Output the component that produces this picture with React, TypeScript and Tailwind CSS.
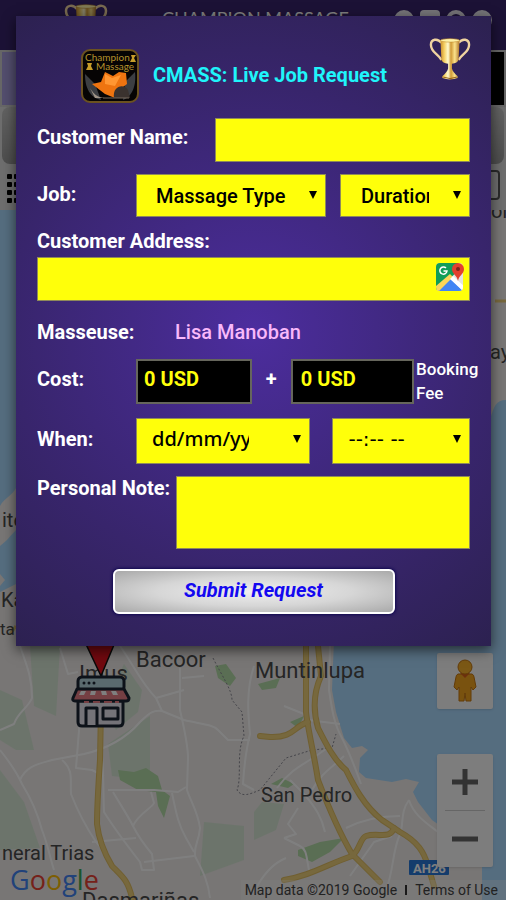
import type { ReactNode } from 'react';
import clsx from 'clsx';

const FIELD = 'w-full rounded-none border border-[#8f8a5a] bg-[#ffff0a] text-black outline-none';
const LABEL = 'text-xl leading-6 font-bold text-white';

const GOOGLE_LETTERS = [
  { char: 'G', color: 'text-[#4285f4]' },
  { char: 'o', color: 'text-[#ea4335]' },
  { char: 'o', color: 'text-[#fbbc05]' },
  { char: 'g', color: 'text-[#4285f4]' },
  { char: 'l', color: 'text-[#34a853]' },
  { char: 'e', color: 'text-[#ea4335]' },
];

const PLACES = [
  { name: 'Bacoor', x: 136, y: 667, size: 22 },
  { name: 'Imus', x: 79, y: 681, size: 22 },
  { name: 'Muntinlupa', x: 255, y: 678, size: 22 },
  { name: 'San Pedro', x: 261, y: 802, size: 20 },
  { name: 'neral Trias', x: 2, y: 860, size: 20 },
  { name: 'Dasmariñas', x: 82, y: 908, size: 22 },
  { name: 'ite', x: 2, y: 527, size: 20 },
  { name: 'Ka', x: 1, y: 607, size: 20 },
  { name: 'ta', x: 0, y: 635, size: 17 },
  { name: 'ay', x: 490, y: 359, size: 20 },
  { name: 'or', x: 491, y: 218, size: 20 },
];

// Fine local roads, drawn under the highways
const ROADS = [
  'M20 646 C26 664 32 676 32 698 C28 708 18 712 14 724 L0 730',
  'M0 750 C12 765 18 775 22 784 C32 800 38 815 42 830 C48 845 50 858 54 870',
  'M20 780 C26 766 38 764 52 760 L84 754 C110 748 128 736 140 722 C150 712 154 710 162 711 L184 720 C200 724 212 724 218 730 L228 740 L250 740',
  'M62 760 C74 770 70 780 71 794 C78 812 88 830 96 842 C102 850 110 852 114 872',
  'M80 718 L76 768 L92 770 L104 776',
  'M60 648 L68 674 L78 672',
  'M100 742 C104 758 103 790 104 812 C114 828 126 844 140 862 L142 870 L154 870 L152 854 C142 842 138 836 133 826 C138 814 152 808 154 803 L151 792',
  'M120 646 C134 666 142 684 156 698 L162 711',
  'M108 790 L154 790 L178 792 L186 787',
  'M113 792 C120 804 128 816 133 826',
  'M172 793 C176 812 178 824 186 838 L194 852',
  'M180 668 L180 710 C184 728 188 744 188 758 L187 790 C190 800 198 812 200 828 C199 842 194 844 195 856 C202 870 208 880 210 898',
  'M92 842 L136 838',
  'M144 862 L194 856',
  'M254 666 C246 690 248 714 250 734 C246 750 244 768 243 784 L254 790',
  'M156 698 L184 690 M182 678 L204 676',
  'M330 646 L329 690 C332 710 334 724 342 738 C350 754 356 770 361 784',
  'M277 788 C290 770 304 764 316 756 L330 746 M312 790 C322 772 332 768 344 756',
  'M290 780 L304 794 C316 808 322 818 325 832',
  'M346 828 C362 820 380 816 400 816 M409 800 C400 812 404 824 400 834 C392 852 394 870 386 890',
  'M409 800 C414 816 428 824 438 832',
  'M284 838 L300 846 C308 850 306 860 310 874 M284 838 L296 834 L288 824 L298 808',
  'M254 892 C264 872 276 862 286 858 M350 876 L374 842 L392 836',
  'M308 720 L340 724 M284 706 L304 714',
];

const HIGHWAYS = [
  'M101 708 L100 760 C98 790 97 806 97 824 C99 842 106 856 112 866 C122 876 128 880 132 898',
  'M306 646 L306 712 C308 730 314 754 318 780 C328 806 340 834 352 854 L380 882',
  'M318 646 L321 676 C312 696 314 714 318 728 C326 744 334 760 346 770 C354 786 364 806 382 820 L400 832 C418 842 424 852 428 866 L434 886',
  'M308 722 C294 726 294 738 270 737 L260 736',
  'M284 880 C310 876 328 864 352 856 C360 850 360 838 366 836 C378 832 390 840 394 828',
];

const PARKS = [
  'M30 646 L60 646 L56 716 L34 706 Z',
  'M0 690 L22 700 L34 750 L16 750 L0 740 Z',
  'M124 664 L142 690 L138 712 L116 730 L104 706 Z',
  'M108 744 L150 716 L150 780 L112 776 Z',
  'M204 822 L244 826 L244 860 L200 876 Z',
  'M0 770 L24 802 L40 848 L0 850 Z',
  'M254 812 L262 802 L284 804 L276 830 L254 840 Z',
];

const GROVES = [
  'M118 770 L134 772 L146 768 L158 776 L162 790 L170 796 L164 818 L158 806 L156 792 L138 790 L120 780 Z',
  'M215 666 L226 664 L236 678 L230 686 L218 678 Z',
  'M271 784 L282 778 L294 784 L288 788 Z',
  'M258 684 L280 678 L276 688 L262 690 Z',
  'M298 850 L320 842 L344 838 L330 852 L312 862 L298 856 Z',
  'M290 722 L304 716 L298 728 Z',
];

function MapCanvas() {
  return (
    <svg
      className="absolute inset-0 h-full w-full"
      viewBox="0 210 506 690"
      preserveAspectRatio="xMidYMid slice"
      aria-label="Map"
    >
      <rect y="200" width="506" height="700" fill="#f0ecea" />
      <path d="M0 200 H300 V640 H0 Z" fill="#aadaff" />
      <path d="M16 488 C12 496 4 498 0 506 V546 C8 540 10 536 16 530 Z" fill="#f0ecea" />
      <path d="M0 574 L5 580 L0 586 Z M0 592 L16 584 V650 H0 Z" fill="#f0ecea" />
      <path
        d="M334 640 L332 690 L336 712 L344 738 L352 748 L362 746 L368 750 L360 758 L359 772 L366 778 L392 782 L406 779 L419 782 L413 792 L418 802 L432 820 L460 840 L482 866 V900 H506 V400 C496 400 494 406 490 420 V640 Z"
        fill="#aadaff"
      />
      {PARKS.map((d) => (
        <path key={d} d={d} fill="#cfe8cf" opacity="0.7" />
      ))}
      {GROVES.map((d) => (
        <path key={d} d={d} fill="#b4dca8" />
      ))}
      <g fill="none" stroke="#ffffff" strokeWidth="2" strokeLinejoin="round">
        {ROADS.map((d) => (
          <path key={d} d={d} />
        ))}
      </g>
      <g fill="none" stroke="#8a8a94" strokeWidth="1" strokeDasharray="2 2">
        <path d="M213 658 C222 676 232 690 232 700 L242 712 L244 736 C236 752 242 778 237 790 C242 798 250 794 260 790 L286 758 L312 750 L332 748 L336 734" />
      </g>
      <g fill="none" strokeLinecap="round">
        {HIGHWAYS.map((d) => (
          <path key={d} d={d} stroke="#e0be62" strokeWidth="6" />
        ))}
        {HIGHWAYS.map((d) => (
          <path key={d} d={d} stroke="#efd07a" strokeWidth="4" />
        ))}
      </g>
      <path d="M495 301 H506 M10 634 L16 626" stroke="#efd07a" strokeWidth="3" />
      <g className="font-[Roboto,sans-serif]" fill="#4a4a4a">
        {PLACES.map((place) => (
          <text key={place.name} x={place.x} y={place.y} fontSize={place.size}>
            {place.name}
          </text>
        ))}
      </g>
      <rect x="409" y="860" width="40" height="15" rx="1" fill="#2878d8" />
      <text x="413" y="873" fontSize="13" fontWeight="700" fill="#ffffff" className="font-[Roboto,sans-serif]">
        AH26
      </text>

      {/* selected shop and its pin */}
      <path d="M84 640 H116 L101 676 Z" fill="#e3131f" stroke="#111" strokeWidth="1.5" />
      <g stroke="#1b2433" strokeWidth="3" strokeLinejoin="round">
        <path d="M78 701 V722 Q78 726 82 726 H119 Q123 726 123 722 V701 Z" fill="#e8e6f0" />
        <rect x="78" y="677" width="46" height="14" rx="4" fill="#b4d4dc" />
        <path d="M77 689 H124 L129 698 Q129 701 126 701 H75 Q72 701 73 698 Z" fill="#ea7f86" />
        <path d="M86 725 V708 H97 V725" fill="#e8e6f0" />
        <rect x="103" y="708" width="15" height="11" fill="#e8e6f0" />
      </g>
      <path d="M81 691 h5 l-2 4 h-5 Z M91 691 h5 l-1 4 h-5 Z M101 691 h5 l1 4 h-5 Z M111 691 h5 l2 4 h-5 Z" fill="#fff" />
      <path d="M84 702 h5 M93 702 h7 M104 702 h8 M115 702 h4" stroke="#ea7f86" strokeWidth="2" />
      <g fill="#1b2433">
        <circle cx="84" cy="683" r="1.5" />
        <circle cx="89" cy="683" r="1.5" />
        <circle cx="94" cy="683" r="1.5" />
      </g>
    </svg>
  );
}

function Trophy({ className }: { className?: string }) {
  return (
    <svg className={className} viewBox="0 0 44 46" aria-hidden="true">
      <defs>
        <linearGradient id="gold" x1="0" x2="1">
          <stop offset="0" stopColor="#c98e2c" />
          <stop offset="0.2" stopColor="#f5cf62" />
          <stop offset="0.4" stopColor="#fffbd0" />
          <stop offset="0.55" stopColor="#d09a36" />
          <stop offset="0.75" stopColor="#fbe28a" />
          <stop offset="1" stopColor="#b0762a" />
        </linearGradient>
      </defs>
      <g fill="none" stroke="#f0d4a0" strokeWidth="2.5">
        <path d="M13 6 C9 1 2 2 2 8 C2 16 9 17 13 24" />
        <path d="M31 6 C35 1 42 2 42 8 C42 16 35 17 31 24" />
      </g>
      <path d="M12 3 H32 L31 24 Q30 27 24 28 L24 33 Q25 37 30 41 V43 Q22 46 14 43 V41 Q19 37 20 33 L20 28 Q14 27 13 24 Z" fill="url(#gold)" />
      <ellipse cx="22" cy="3.5" rx="10" ry="1.8" fill="#fff3a8" stroke="#c08a2c" strokeWidth="0.6" />
      <path d="M15 42 Q22 45 29 42" fill="none" stroke="#8f5a14" strokeWidth="1" />
    </svg>
  );
}

function AppIcon() {
  return (
    <svg className="size-[58px] shrink-0" viewBox="0 0 58 58" aria-hidden="true">
      <rect x="1" y="2" width="56" height="52" rx="8" fill="#060404" stroke="#6b5220" strokeWidth="2" />
      <path d="M4 26 C4 44 12 50 20 52 L14 36 Z M54 24 C56 42 48 50 42 52 L44 34 Z" fill="#3c3e42" />
      <path d="M20 34 L24 24 L32 28 L38 24 L45 25 L46 36 L38 42 L34 50 L24 46 L11 36 Z" fill="#ee7410" />
      <path d="M24 26 L31 30 L40 27 L34 38 L24 36 Z" fill="#ff9632" />
      <path d="M33 50 C31 38 43 35 47 42 L49 50 Z" fill="#3a322e" />
      <path d="M9 40 C14 48 18 50 26 50 H14 Z" fill="#a09488" />
      <path d="M22 50 H48" stroke="#75685c" strokeWidth="1" />
      <g fill="#b5932c" fontSize="10" className="font-[Lato,sans-serif]">
        <text x="4" y="13">Champion</text>
        <text x="15" y="22">Massage</text>
      </g>
      <path d="M50 7 h5 l-2 3 2 4 h-6 l2 -4 Z M6 15 h5 l-1 3 2 4 h-7 l2 -4 Z" fill="#c79d2a" />
    </svg>
  );
}

function MapsIcon({ className }: { className?: string }) {
  return (
    <svg className={className} viewBox="0 0 28 28" aria-hidden="true">
      <defs>
        <clipPath id="tile">
          <rect width="27" height="28" rx="4" />
        </clipPath>
      </defs>
      <g clipPath="url(#tile)">
        <rect width="28" height="28" fill="#e4e4e4" />
        <path d="M0 0 H22 V8 L0 28 Z" fill="#109d58" />
        <path d="M14 15 L27 28 H1 Z" fill="#4285f4" />
        <path d="M0 23 L14 11 L17 14 L3 28 H0 Z" fill="#fbd55a" />
        <path d="M14 16 L27 28 H29 V24 L17 13 Z" fill="#ffffff" />
      </g>
      <path d="M10 5 A3.6 3.6 0 1 0 11 8 H7.5" fill="none" stroke="#fff" strokeWidth="1.5" />
      <path d="M22 18 C21 12 16 11 16 6 A6 6 0 0 1 28 6 C28 11 23 12 22 18 Z" fill="#e2402f" />
      <circle cx="22" cy="6" r="2" fill="#7d241c" />
    </svg>
  );
}

function Pegman() {
  return (
    <svg className="h-11 w-6" viewBox="0 0 24 44" aria-hidden="true">
      <path d="M5 15 H19 Q21 16 21 18 L23 28 L20 31 L18 28 L18 42 H13 L12 34 L11 42 H6 L6 28 L4 31 L1 28 L3 18 Q3 16 5 15 Z" fill="#f2a51e" stroke="#c77710" />
      <path d="M7 14 L12 19 L17 14 Z" fill="#d9601a" />
      <circle cx="12" cy="8" r="7" fill="#f7b02a" stroke="#c77710" />
    </svg>
  );
}

type DropdownProps = {
  id: string;
  label: string;
  value: string;
  className: string;
  selectClassName: string;
};

function Dropdown({ id, label, value, className, selectClassName }: DropdownProps) {
  return (
    <div className={clsx('relative', className)}>
      <select
        id={id}
        aria-label={label}
        className={clsx(FIELD, 'appearance-none text-xl font-medium', selectClassName)}
      >
        <option>{value}</option>
      </select>
      <svg className="pointer-events-none absolute top-4 right-2 h-2.5 w-2.5" viewBox="0 0 10 10" aria-hidden="true">
        <path d="M1 1 H9 L5 9 Z" />
      </svg>
    </div>
  );
}

function Row({ label, htmlFor, children }: { label: string; htmlFor: string; children: ReactNode }) {
  return (
    <div className="flex items-center">
      <label htmlFor={htmlFor} className={clsx(LABEL, 'w-[99px] shrink-0 pb-1')}>
        {label}
      </label>
      {children}
    </div>
  );
}

function JobRequestForm() {
  return (
    <form
      onSubmit={(e) => e.preventDefault()}
      className="bg-[radial-gradient(circle_at_center,#4c2d9e_0%,#38256c_62%,#2c2150_100%)] px-[21px] pt-8 pb-8 shadow-[0_4px_12px_rgba(0,0,0,0.6)]"
    >
      <div className="flex items-center gap-3.5 pl-11">
        <AppIcon />
        <h1 className="pb-1 text-xl font-bold text-[#1ff4fa]">CMASS: Live Job Request</h1>
      </div>
      <Trophy className="absolute top-5 right-5 h-[46px] w-[42px]" />

      <div className="mt-3 flex items-start">
        <label htmlFor="name" className={clsx(LABEL, 'w-[178px] shrink-0 pt-[7px]')}>
          Customer Name:
        </label>
        <input id="name" type="text" className={clsx(FIELD, 'h-11 min-w-0 px-3 text-xl')} />
      </div>

      <div className="mt-3">
        <Row label="Job:" htmlFor="massage">
          <Dropdown id="massage" label="Massage type" value="Massage Type" className="min-w-0 flex-[190]" selectClassName="h-[43px] pl-[19px] pr-9" />
          <Dropdown id="duration" label="Duration" value="Duration" className="ml-3.5 min-w-0 flex-[130]" selectClassName="h-[43px] pl-5 pr-10" />
        </Row>
      </div>

      <label htmlFor="address" className={clsx(LABEL, 'mt-3 block')}>
        Customer Address:
      </label>
      <div className="relative mt-1">
        <input id="address" type="text" className={clsx(FIELD, 'block h-11 pr-11 pl-3 text-xl')} />
        <button type="button" aria-label="Pick on map" className="absolute top-1.5 right-1.5">
          <MapsIcon className="h-7 w-7" />
        </button>
      </div>

      <div className="mt-[19px] flex">
        <span className={clsx(LABEL, 'w-[138px] shrink-0')}>Masseuse:</span>
        <span className="text-xl leading-6 font-medium text-[#f8b8fa]">Lisa Manoban</span>
      </div>

      <div className="mt-[13px] -mr-2.5">
        <Row label="Cost:" htmlFor="cost">
          <input id="cost" readOnly value="0 USD" className="h-[45px] min-w-0 flex-[118] border-2 border-[#66665c] bg-black px-1.5 pb-1 text-xl font-bold text-[#ffff0a]" />
          <span className="w-[39px] pb-1 text-center text-xl font-bold text-white">+</span>
          <input id="fee" readOnly value="0 USD" className="h-[45px] min-w-0 flex-[122] border-2 border-[#66665c] bg-black px-2 pb-1 text-xl font-bold text-[#ffff0a]" />
          <label htmlFor="fee" className="ml-0.5 w-[64px] text-[17px] leading-6 font-medium text-white">
            Booking Fee
          </label>
        </Row>
      </div>

      <div className="mt-[13px]">
        <Row label="When:" htmlFor="date">
          <Dropdown id="date" label="Date" value="dd/mm/yyyy" className="min-w-0 flex-[175]" selectClassName="h-[46px] pl-[15px] pr-15 pb-1 font-['Noto_Sans',sans-serif]" />
          <Dropdown id="time" label="Time" value="--:-- --" className="ml-[22px] min-w-0 flex-[138]" selectClassName="h-[46px] pl-[15px] pb-1 font-['DejaVu_Sans',sans-serif]" />
        </Row>
      </div>

      <div className="mt-3 flex items-start">
        <label htmlFor="note" className={clsx(LABEL, 'w-[139px] shrink-0')}>
          Personal Note:
        </label>
        <textarea id="note" className={clsx(FIELD, 'h-[73px] min-w-0 resize-none p-2 text-xl')} />
      </div>

      <button
        type="submit"
        className="mx-auto mt-5 block h-[45px] w-[282px] rounded-md border-2 border-white bg-[radial-gradient(ellipse_at_center,#efefef_0%,#d6d6d6_50%,#a9a9a9_100%)] pb-1 text-xl font-bold text-[#1408f0] italic shadow-[0_0_3px_1px_#100850]"
      >
        Submit Request
      </button>
    </form>
  );
}

export default function App() {
  return (
    <div className="relative flex min-h-screen flex-col overflow-hidden font-[Roboto,sans-serif]">
      <header className="flex h-[50px] items-start bg-[#38246c] pt-[3px] pr-3.5 pl-16">
        <Trophy className="h-[46px] w-11" />
        <span className="ml-[54px] pt-px font-[Lato,sans-serif] text-lg whitespace-nowrap text-white">
          CHAMPION MASSAGE
        </span>
        <div className="mt-[7px] ml-auto flex gap-1.5">
          <span className="size-5 rounded-full bg-white/90" />
          <span className="size-5 rounded bg-white/90" />
          <span className="size-5 rounded-full border-4 border-white/90" />
          <span className="size-5 rounded-full bg-white/90" />
        </div>
      </header>

      <nav className="flex h-[57px] border-2 border-[#cfcfcf]">
        <span className="flex-1 bg-[#a79ddd]" />
        <span className="flex-1 bg-black" />
      </nav>
      <div className="h-[61px] bg-[#dcdcdc] px-0.5 pb-1">
        <div className="h-full rounded-lg bg-linear-to-b from-[#c4c4c4] to-[#9b9b9b]" />
      </div>
      <div className="flex h-[42px] items-start justify-between bg-[#dcdcdc] px-1.5 pt-0.5">
        <svg className="mt-0.5 h-8 w-8" viewBox="0 0 32 32" aria-hidden="true">
          {[2, 10, 18, 26].map((y) =>
            [1, 8, 16, 24].map((x) => <rect key={`${x}-${y}`} x={x} y={y} width="5" height="5" rx="1" />),
          )}
        </svg>
        <div className="h-[30px] w-24 rounded border-2 border-[#555]" />
      </div>

      <main className="relative flex-1">
        <MapCanvas />
        <div className="absolute right-[13px] bottom-[33px] flex w-14 flex-col gap-[45px]">
          <button type="button" aria-label="Street View" className="flex h-14 items-center justify-center rounded-xs bg-[#fafafa] shadow">
            <Pegman />
          </button>
          <div className="flex flex-col items-center rounded-xs bg-[#fafafa] shadow">
            <button type="button" aria-label="Zoom in" className="flex h-14 w-full items-center justify-center">
              <svg className="size-[26px]" viewBox="0 0 26 26"><path d="M13 0 V26 M0 13 H26" stroke="#666" strokeWidth="5" /></svg>
            </button>
            <span className="h-px w-10 bg-[#ccc]" />
            <button type="button" aria-label="Zoom out" className="flex h-14 w-full items-center justify-center">
              <svg className="size-[26px]" viewBox="0 0 26 26"><path d="M0 13 H26" stroke="#666" strokeWidth="5" /></svg>
            </button>
          </div>
        </div>
        <div className="absolute bottom-0 left-2.5 font-['Open_Sans',sans-serif] text-[27px] leading-10 font-medium">
          {GOOGLE_LETTERS.map((letter, i) => (
            <span key={i} className={letter.color}>{letter.char}</span>
          ))}
        </div>
        <div className="absolute right-0 bottom-0 flex h-5 items-center gap-2 bg-white/30 pr-2 pl-1 text-sm text-[#444]">
          <span>Map data ©2019 Google</span>
          <span className="h-2.5 w-0.5 bg-[#333]" />
          <a href="#terms">Terms of Use</a>
        </div>
      </main>

      <div className="absolute inset-0 bg-black/50" />
      <div className="absolute top-4 right-[15px] left-4">
        <JobRequestForm />
      </div>
    </div>
  );
}
